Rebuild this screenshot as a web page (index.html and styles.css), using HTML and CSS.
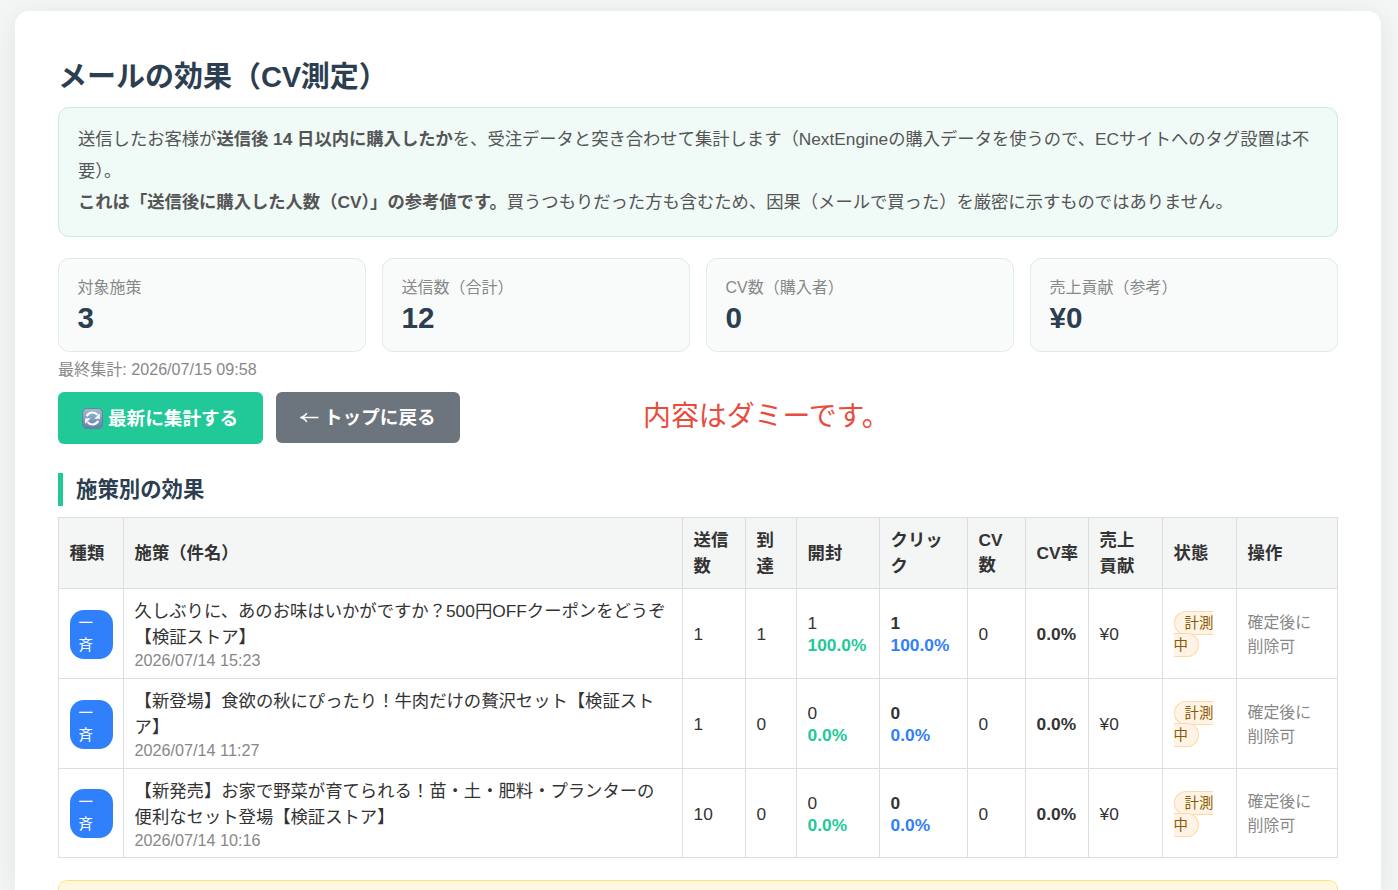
FILE: index.html
```html
<!DOCTYPE html>
<html lang="ja">
<head>
    <meta charset="UTF-8">
    <meta name="viewport" content="width=device-width, initial-scale=1.0">
    <title>メールの効果（CV測定）</title>
    <link rel="stylesheet" href="styles.css">
</head>
<body>
    <div class="container">
        <h1>メールの効果（<span class="latin">CV</span>測定）</h1>

        <div class="info">
            送信したお客様が<b>送信後 14 日以内に購入したか</b>を、受注データと突き合わせて集計します（NextEngineの購入データを使うので、ECサイトへのタグ設置は不<br>要）。<br>
            <b>これは「送信後に購入した人数（CV）」の参考値です。</b>買うつもりだった方も含むため、因果（メールで買った）を厳密に示すものではありません。
        </div>

        <div class="cards">
            <div class="card">
                <div class="card-label">対象施策</div>
                <div class="card-value">3</div>
            </div>
            <div class="card">
                <div class="card-label">送信数（合計）</div>
                <div class="card-value">12</div>
            </div>
            <div class="card">
                <div class="card-label">CV数（購入者）</div>
                <div class="card-value">0</div>
            </div>
            <div class="card">
                <div class="card-label">売上貢献（参考）</div>
                <div class="card-value">¥0</div>
            </div>
        </div>

        <div class="updated">最終集計: 2026/07/15 09:58</div>

        <div class="toolbar">
            <button class="btn btn-primary" type="button">
                <svg class="icon" viewBox="0 0 22 22">
                    <defs>
                        <linearGradient id="refresh-bg" x1="0" y1="0" x2="0" y2="1">
                            <stop offset="0" stop-color="#a3bbd3"/>
                            <stop offset="1" stop-color="#5d81a8"/>
                        </linearGradient>
                    </defs>
                    <rect x="0.5" y="0.5" width="21" height="21" rx="4.5" fill="url(#refresh-bg)" stroke="#64809f"/>
                    <path d="M5 8.6A6.6 6.6 0 0 1 16.2 7.2M17 13.4A6.6 6.6 0 0 1 5.8 14.8" fill="none" stroke="#fff" stroke-width="2.2"/>
                    <path d="M18.7 5.6v5.6h-5.8zM3.3 16.4v-5.6h5.8z" fill="#fff"/>
                </svg>
                <span>最新に集計する</span>
            </button>
            <a class="btn btn-back" href="#">
                <svg class="arrow" viewBox="0 0 18 12">
                    <path d="M17.5 6H1.5M6.5 1.8Q4.5 5 1 6Q4.5 7 6.5 10.2" fill="none" stroke="#fff" stroke-width="1.4"/>
                </svg>
                <span>トップに戻る</span>
            </a>
            <span class="note">内容はダミーです。</span>
        </div>

        <h2>施策別の効果</h2>

        <table>
            <colgroup>
                <col class="c-kind">
                <col class="c-name">
                <col class="c-sent">
                <col class="c-reach">
                <col class="c-open">
                <col class="c-click">
                <col class="c-cv">
                <col class="c-rate">
                <col class="c-sales">
                <col class="c-status">
                <col class="c-action">
            </colgroup>
            <thead>
                <tr>
                    <th>種類</th>
                    <th>施策（件名）</th>
                    <th>送信<br>数</th>
                    <th>到<br>達</th>
                    <th>開封</th>
                    <th>クリッ<br>ク</th>
                    <th class="cv-head">CV<br>数</th>
                    <th>CV率</th>
                    <th>売上<br>貢献</th>
                    <th>状態</th>
                    <th>操作</th>
                </tr>
            </thead>
            <tbody>
                <tr>
                    <td><span class="kind">一<br>斉</span></td>
                    <td class="name">久しぶりに、あのお味はいかがですか？500円OFFクーポンをどうぞ<br>【検証ストア】<div class="date">2026/07/14 15:23</div></td>
                    <td>1</td>
                    <td>1</td>
                    <td class="open">1<br><b>100.0%</b></td>
                    <td class="click"><b>1</b><br><b class="pct">100.0%</b></td>
                    <td>0</td>
                    <td><b>0.0%</b></td>
                    <td>¥0</td>
                    <td class="status"><span>計測<br>中</span></td>
                    <td class="action">確定後に<br>削除可</td>
                </tr>
                <tr>
                    <td><span class="kind">一<br>斉</span></td>
                    <td class="name">【新登場】食欲の秋にぴったり！牛肉だけの贅沢セット【検証スト<br>ア】<div class="date">2026/07/14 11:27</div></td>
                    <td>1</td>
                    <td>0</td>
                    <td class="open">0<br><b>0.0%</b></td>
                    <td class="click"><b>0</b><br><b class="pct">0.0%</b></td>
                    <td>0</td>
                    <td><b>0.0%</b></td>
                    <td>¥0</td>
                    <td class="status"><span>計測<br>中</span></td>
                    <td class="action">確定後に<br>削除可</td>
                </tr>
                <tr>
                    <td><span class="kind">一<br>斉</span></td>
                    <td class="name">【新発売】お家で野菜が育てられる！苗・土・肥料・プランターの<br>便利なセット登場【検証ストア】<div class="date">2026/07/14 10:16</div></td>
                    <td>10</td>
                    <td>0</td>
                    <td class="open">0<br><b>0.0%</b></td>
                    <td class="click"><b>0</b><br><b class="pct">0.0%</b></td>
                    <td>0</td>
                    <td><b>0.0%</b></td>
                    <td>¥0</td>
                    <td class="status"><span>計測<br>中</span></td>
                    <td class="action">確定後に<br>削除可</td>
                </tr>
            </tbody>
        </table>

        <div class="warning"></div>
    </div>
</body>
</html>
```
FILE: styles.css
```css
* {
    box-sizing: border-box;
}

body {
    margin: 0;
    padding: 11px 17px 0 15px;
    height: 890px;
    overflow: hidden;
    background-color: #f4f6f5;
    color: #333;
    font-family: "Liberation Sans", "Noto Sans CJK JP", sans-serif;
    font-size: 17.33px;
}

.container {
    height: 879px;
    padding: 43px 43px 0;
    background: white;
    border-radius: 14px 14px 0 0;
    box-shadow: 0 5px 29px rgba(0, 0, 0, 0.08);
}

h1 {
    margin: 0;
    height: 53px;
    line-height: 46px;
    font-size: 29px;
    color: #2c3e50;
}

h1 .latin {
    letter-spacing: -0.3px;
}

.info {
    height: 130px;
    padding: 16.4px 19px;
    background: #f0faf7;
    border: 1px solid #c8ede0;
    border-radius: 11px;
    line-height: 31.4px;
    font-size: 17.31px;
    color: #555;
    white-space: nowrap;
}

.cards {
    display: grid;
    grid-template-columns: repeat(4, 1fr);
    gap: 16px;
    margin-top: 21px;
}

.card {
    height: 94px;
    padding: 17px 18.5px;
    background: #f9fbfa;
    border: 1px solid #e0ece8;
    border-radius: 11px;
}

.card-label {
    height: 24px;
    line-height: 24px;
    font-size: 16px;
    color: #888;
}

.card-value {
    line-height: 35px;
    font-size: 29.6px;
    font-weight: bold;
    color: #2c3e50;
}

.updated {
    height: 40px;
    line-height: 35px;
    font-size: 16.1px;
    color: #888;
}

.toolbar {
    display: flex;
    align-items: flex-start;
    height: 52px;
}

.btn {
    display: flex;
    align-items: center;
    height: 52px;
    padding: 0 24px;
    border: none;
    border-radius: 6px;
    font-family: inherit;
    font-size: 18.6px;
    font-weight: bold;
    color: white;
    text-decoration: none;
    white-space: nowrap;
    cursor: pointer;
}

.btn span {
    padding-bottom: 4px;
}

.btn-primary {
    width: 205px;
    background-color: #20c997;
}

.btn-back {
    width: 184px;
    height: 51px;
    margin-left: 13px;
    background-color: #6c757d;
}

.icon {
    flex: none;
    width: 21px;
    height: 21px;
    margin-right: 5px;
}

.arrow {
    flex: none;
    width: 19px;
    height: 13px;
    margin-right: 5px;
}

.note {
    margin-left: 183px;
    line-height: 50px;
    font-size: 27.9px;
    color: #e94b3c;
}

h2 {
    margin: 29px 0 11px;
    height: 33px;
    padding-left: 13px;
    border-left: 5px solid #20c997;
    line-height: 34px;
    font-size: 21.4px;
    color: #2c3e50;
}

table {
    width: 1280px;
    table-layout: fixed;
    border-collapse: collapse;
}

.c-kind { width: 65px; }
.c-name { width: 559px; }
.c-sent { width: 63px; }
.c-reach { width: 51px; }
.c-open { width: 83px; }
.c-click { width: 88px; }
.c-cv { width: 58px; }
.c-rate { width: 63px; }
.c-sales { width: 74px; }
.c-status { width: 74px; }
.c-action { width: 101px; }

th, td {
    padding: 0 0 0 10.6px;
    border: 1px solid #ddd;
    text-align: left;
    vertical-align: middle;
    line-height: 26px;
    white-space: nowrap;
}

th {
    height: 71px;
    background-color: #f4f6f5;
}

.cv-head {
    line-height: 25px;
}

td {
    height: 90px;
    padding-top: 1px;
}

tr:last-child td {
    height: 89px;
}

.name, .action {
    padding-top: 2px;
}

.kind {
    display: block;
    width: 43px;
    height: 49px;
    padding: 2px 9px;
    background: #2f80fa;
    border-radius: 14px;
    line-height: 22px;
    font-size: 14.4px;
    color: white;
}

.date {
    line-height: 21px;
    font-size: 16.2px;
    color: #888;
}

.open, .click {
    line-height: 22px;
}

.open b {
    color: #20c997;
}

.click .pct {
    color: #2f80fa;
}

.status {
    line-height: 22px;
    font-size: 14.4px;
}

.status span {
    padding: 3px 10px;
    background: #fff3e6;
    border: 1px solid #ffd8a8;
    border-radius: 14px;
    color: #8a5a00;
}

.action {
    line-height: 24px;
    font-size: 15.9px;
    color: #888;
}

.warning {
    height: 10px;
    margin-top: 22px;
    background: #fff8e1;
    border: 1px solid #ffe082;
    border-bottom: none;
    border-radius: 9px 9px 0 0;
}
```
